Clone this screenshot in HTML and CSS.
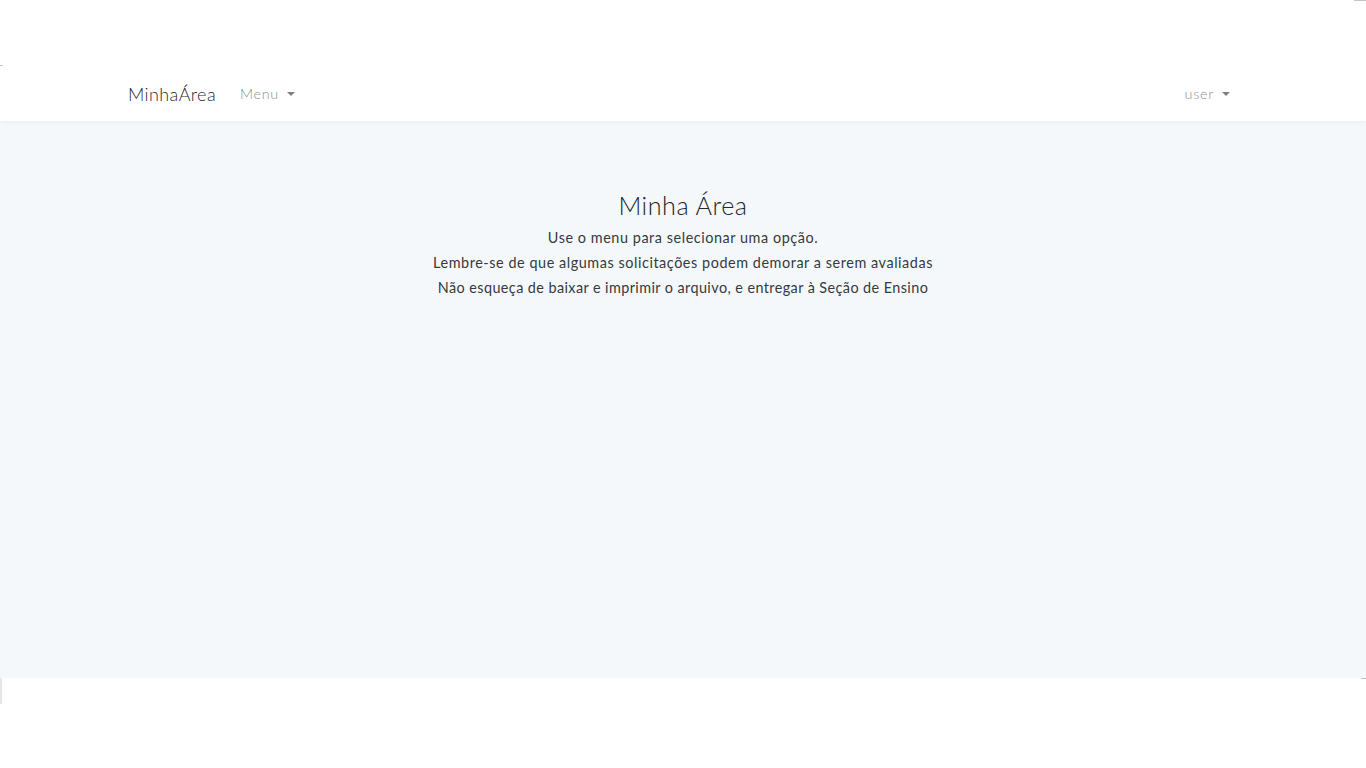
FILE: index.html
```html
<!DOCTYPE html>
<html lang="pt-BR">
<head>
<meta charset="utf-8">
<title>Minha Área</title>
<link rel="stylesheet" href="styles.css">
</head>
<body>
<span class="mark mark-tl"></span>
<span class="mark mark-tr"></span>
<div class="top-space"></div>
<div class="app">
  <nav class="navbar">
    <div class="container nav-inner">
      <div class="nav-left">
        <a class="brand" href="#">MinhaÁrea</a>
        <a class="nav-link dropdown-toggle" href="#">Menu</a>
      </div>
      <div class="nav-right">
        <a class="nav-link dropdown-toggle" href="#">user</a>
      </div>
    </div>
  </nav>
  <main class="main">
    <h3 class="title">Minha Área</h3>
    <p class="line">Use o menu para selecionar uma opção.</p>
    <p class="line">Lembre-se de que algumas solicitações podem demorar a serem avaliadas</p>
    <p class="line line-tight">Não esqueça de baixar e imprimir o arquivo, e entregar à Seção de Ensino</p>
  </main>
</div>
<div class="bottom">
  <span class="mark mark-bl"></span>
  <span class="mark mark-br"></span>
</div>
</body>
</html>
```

FILE: styles.css
```css
html, body {
  margin: 0;
  padding: 0;
  background: #ffffff;
  font-family: Lato, "Open Sans", "Liberation Sans", sans-serif;
  font-size: 14.4px;
  font-weight: 400;
  color: #212529;
}
body { position: relative; min-height: 768px; }

.top-space { height: 66px; }

.app { background: #f5f8fa; }

.navbar {
  background: #ffffff;
  height: 55px;
  box-shadow: 0 2px 4px rgba(0, 0, 0, 0.04);
  position: relative;
}
.container {
  width: 1110px;
  margin: 0 auto;
  padding: 0 15px;
}
.nav-inner {
  height: 55px;
  display: flex;
  align-items: center;
  justify-content: space-between;
}
.nav-left, .nav-right {
  display: flex;
  align-items: center;
}
.brand {
  font-size: 18px;
  font-weight: 300;
  color: rgba(0, 0, 0, 0.9);
  text-decoration: none;
  margin-right: 16px;
  letter-spacing: 0.4px;
}
.nav-link {
  font-size: 14.4px;
  font-weight: 300;
  color: rgba(0, 0, 0, 0.5);
  text-decoration: none;
  padding: 8px;
  display: flex;
  align-items: center;
  letter-spacing: 0.7px;
}
.dropdown-toggle::after {
  content: "";
  display: inline-block;
  margin-left: 8px;
  border-top: 4.5px solid rgba(0, 0, 0, 0.5);
  border-left: 4.5px solid transparent;
  border-right: 4.5px solid transparent;
}

.main {
  height: 557px;
  box-sizing: border-box;
  padding-top: 69px;
  text-align: center;
}
.title {
  font-size: 25.2px;
  font-weight: 300;
  line-height: 30px;
  margin: 0 0 5px;
  color: #212529;
  letter-spacing: 0.5px;
}
.line {
  margin: 0;
  line-height: 25px;
  font-size: 14.4px;
  letter-spacing: 0.56px;
  color: #363a3f;
}
.line-tight { letter-spacing: 0.42px; }

.bottom { height: 89px; position: relative; }

.mark { position: absolute; background: #c4c4c4; display: block; }
.mark-tl { left: 0; top: 65px; width: 3px; height: 1px; }
.mark-tr { right: 0; top: 0; width: 12px; height: 1px; }
.mark-bl { left: 0; top: 0; width: 2px; height: 26px; background: #e6e6e6; }
.mark-br { right: 0; top: 0; width: 5px; height: 1px; }
```
